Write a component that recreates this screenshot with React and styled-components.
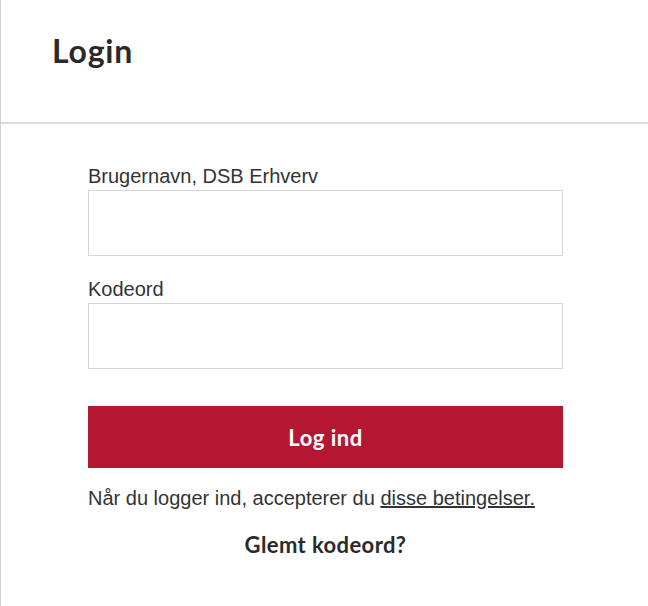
import React from "react";
import styled, { createGlobalStyle } from "styled-components";

const Global = createGlobalStyle`
  html, body { margin: 0; padding: 0; background: #fff; }
  body { font-family: "Liberation Sans", Arial, sans-serif; color: #333; }
  * { box-sizing: border-box; }
`;

const Panel = styled.div`
  min-height: 606px;
  border-left: 1px solid #cfcfcf;
  background: #fff;
`;

const Header = styled.header`
  height: 124px;
  border-bottom: 2px solid #dcdcdc;
  padding: 32px 0 0 51px;
`;

const Title = styled.h1`
  margin: 0;
  font-family: Lato, "Open Sans", sans-serif;
  font-weight: 700;
  font-size: 32px;
  line-height: 38px;
  color: #2a2a2a;
  letter-spacing: 0.8px;
`;

const Form = styled.form`
  width: 475px;
  margin-left: 87px;
  padding-top: 40px;
  display: flex;
  flex-direction: column;
`;

const Field = styled.div`
  display: flex;
  flex-direction: column;
  margin-bottom: ${(p) => p.$gap}px;
`;

const Label = styled.label`
  font-size: 20px;
  line-height: 24px;
  color: #333;
  margin-bottom: 2px;
`;

const Input = styled.input`
  height: 66px;
  border: 1px solid #d6d6d6;
  background: #fff;
  font-size: 18px;
  padding: 0 12px;
  outline: none;
`;

const Button = styled.button`
  height: 62px;
  border: none;
  background: #b41731;
  color: #fff;
  font-family: Lato, "Open Sans", sans-serif;
  font-weight: 700;
  font-size: 22px;
  letter-spacing: 0.5px;
  cursor: pointer;
`;

const Terms = styled.p`
  margin: 18px 0 0;
  font-size: 20px;
  line-height: 24px;
  color: #333;
`;

const TermsLink = styled.a`
  color: #333;
  text-decoration: underline;
`;

const Forgot = styled.a`
  display: block;
  margin-top: 22px;
  text-align: center;
  font-family: Lato, "Open Sans", sans-serif;
  font-weight: 700;
  font-size: 22px;
  line-height: 26px;
  letter-spacing: 0.4px;
  color: #2a2a2a;
  text-decoration: none;
`;

export default function App() {
  return (
    <>
      <Global />
      <Panel>
        <Header>
          <Title>Login</Title>
        </Header>
        <Form onSubmit={(e) => e.preventDefault()}>
          <Field $gap={21}>
            <Label htmlFor="user">Brugernavn, DSB Erhverv</Label>
            <Input id="user" type="text" />
          </Field>
          <Field $gap={37}>
            <Label htmlFor="pw">Kodeord</Label>
            <Input id="pw" type="password" />
          </Field>
          <Button type="submit">Log ind</Button>
          <Terms>
            Når du logger ind, accepterer du <TermsLink href="#">disse betingelser.</TermsLink>
          </Terms>
          <Forgot href="#">Glemt kodeord?</Forgot>
        </Form>
      </Panel>
    </>
  );
}
